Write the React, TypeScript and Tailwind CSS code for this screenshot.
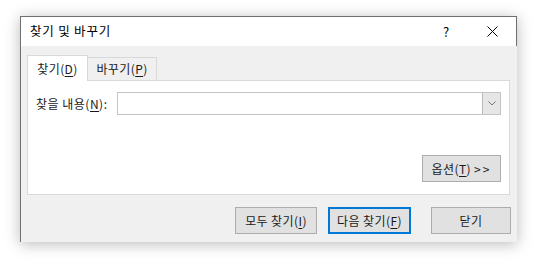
import React from "react";

const font = { fontFamily: '"Noto Sans CJK KR", "Noto Sans", sans-serif' };

function U({ c }: { c: string }) {
  return <span className="underline underline-offset-2">{c}</span>;
}

function Btn({ children, w, primary }: { children: React.ReactNode; w: string; primary?: boolean }) {
  return (
    <div
      className={`${w} h-[27px] flex items-center justify-center bg-[#e1e1e1] text-[12px] tracking-[0.4px] text-[#1a1a1a] ${
        primary ? "border-2 border-[#0078d7]" : "border border-[#adadad]"
      }`}
    >
      {children}
    </div>
  );
}

export default function App() {
  return (
    <div className="w-[537px] h-[259px] bg-white pl-[20px] pt-[16px]" style={font}>
      <div className="w-[497px] h-[226px] flex flex-col shadow-[0_2px_14px_rgba(0,0,0,0.28)]">
        <div className="h-[30px] bg-white border-t border-l border-r border-[#707070] flex items-center pl-[9px] shrink-0">
          <span className="text-[12.5px] tracking-[0.8px] text-black">찾기 및 바꾸기</span>
          <div className="ml-auto flex items-center">
            <span className="text-[13px] text-black w-[46px] text-center">?</span>
            <div className="w-[47px] flex justify-center">
              <svg width="11" height="11" viewBox="0 0 11 11">
                <path d="M0.5 0.5 L10.5 10.5 M10.5 0.5 L0.5 10.5" stroke="#000" strokeWidth="1" />
              </svg>
            </div>
          </div>
        </div>
        <div className="flex-1 bg-[#f0f0f0] border-l border-[#707070] flex flex-col pl-[6px] pr-[7px] pt-[9px]">
          <div className="flex items-end h-[26px] -mb-px relative z-10">
            <div className="w-[61px] h-[26px] bg-white border border-b-0 border-[#d9d9d9] flex items-center justify-center text-[12px] tracking-[0.4px] text-[#1a1a1a]">
              찾기(<U c="D" />)
            </div>
            <div className="w-[69px] h-[24px] bg-[#f0f0f0] border border-l-0 border-[#d9d9d9] flex items-center justify-center text-[12px] tracking-[0.4px] text-[#1a1a1a]">
              바꾸기(<U c="P" />)
            </div>
          </div>
          <div className="h-[115px] bg-white border border-[#d9d9d9] flex flex-col pl-[8px] pr-[8px] pt-[11px]">
            <div className="flex items-center h-[23px]">
              <span className="w-[81px] text-[12px] tracking-[0.5px] text-[#1a1a1a] whitespace-nowrap">
                찾을 내용(<U c="N" />):
              </span>
              <div className="flex-1 h-[23px] border border-[#c4c4c4] bg-white flex justify-end">
                <div className="w-[18px] h-full bg-[#e6e6e6] border-l border-[#b8b8b8] flex items-center justify-center">
                  <svg width="8" height="5" viewBox="0 0 8 5">
                    <path d="M0.5 0.5 L4 4 L7.5 0.5" stroke="#777" strokeWidth="1" fill="none" />
                  </svg>
                </div>
              </div>
            </div>
            <div className="flex justify-end mt-[40px]">
              <Btn w="w-[79px]">
                <span>
                  옵션(<U c="T" />) <span className="tracking-[2px]">&gt;&gt;</span>
                </span>
              </Btn>
            </div>
          </div>
          <div className="flex justify-end mt-[12px] mr-[-1px]">
            <Btn w="w-[82px]">
              <span>
                모두 찾기(<U c="I" />)
              </span>
            </Btn>
            <div className="w-[11px]" />
            <Btn w="w-[83px]" primary>
              <span>
                다음 찾기(<U c="F" />)
              </span>
            </Btn>
            <div className="w-[20px]" />
            <Btn w="w-[80px]">닫기</Btn>
          </div>
        </div>
      </div>
    </div>
  );
}
